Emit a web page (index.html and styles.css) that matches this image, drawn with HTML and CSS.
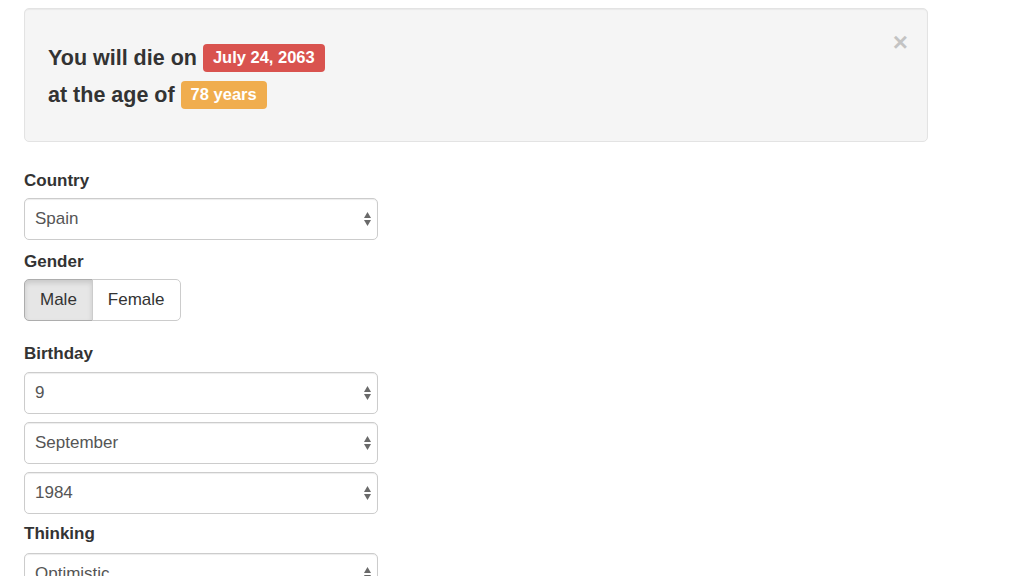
FILE: index.html
```html
<!DOCTYPE html>
<html>
<head>
<meta charset="utf-8">
<link rel="stylesheet" href="styles.css">
</head>
<body>
<div class="container">
  <div class="alert">
    <button class="close" type="button">×</button>
    <h4 class="result">You will die on <span class="badge badge-red">July 24, 2063</span></h4>
    <h4 class="result">at the age of <span class="badge badge-orange">78 years</span></h4>
  </div>

  <form class="form">
    <div class="field">
      <div class="label">Country</div>
      <div class="select"><span>Spain</span><svg class="arrows" width="7" height="14" viewBox="0 0 7 14"><path d="M3.5 0L7 6H0Z"/><path d="M3.5 14L7 8H0Z"/></svg></div>
    </div>

    <div class="field field-gender">
      <div class="label">Gender</div>
      <div class="btn-group">
        <div class="btn active">Male</div>
        <div class="btn">Female</div>
      </div>
    </div>

    <div class="field field-wide">
      <div class="label label-loose">Birthday</div>
      <div class="stack">
        <div class="select"><span>9</span><svg class="arrows" width="7" height="14" viewBox="0 0 7 14"><path d="M3.5 0L7 6H0Z"/><path d="M3.5 14L7 8H0Z"/></svg></div>
        <div class="select"><span>September</span><svg class="arrows" width="7" height="14" viewBox="0 0 7 14"><path d="M3.5 0L7 6H0Z"/><path d="M3.5 14L7 8H0Z"/></svg></div>
        <div class="select"><span>1984</span><svg class="arrows" width="7" height="14" viewBox="0 0 7 14"><path d="M3.5 0L7 6H0Z"/><path d="M3.5 14L7 8H0Z"/></svg></div>
      </div>
    </div>

    <div class="field">
      <div class="label label-looser">Thinking</div>
      <div class="select"><span>Optimistic</span><svg class="arrows" width="7" height="14" viewBox="0 0 7 14"><path d="M3.5 0L7 6H0Z"/><path d="M3.5 14L7 8H0Z"/></svg></div>
    </div>
  </form>
</div>
</body>
</html>
```
FILE: styles.css
```css
* { box-sizing: border-box; }
html, body {
  margin: 0;
  padding: 0;
  background: #fff;
  font-family: "Liberation Sans", Arial, sans-serif;
  color: #333;
  overflow: hidden;
}
.container {
  padding: 8px 0 0 24px;
}
.alert {
  position: relative;
  width: 904px;
  height: 134px;
  background: #f5f5f5;
  border: 1px solid #e3e3e3;
  border-radius: 5px;
  box-shadow: inset 0 1px 1px rgba(0,0,0,0.05);
  padding: 31px 24px 0 23px;
}
.result {
  margin: 0;
  font-size: 21.5px;
  font-weight: bold;
  line-height: 37px;
  color: #333;
}
.badge {
  display: inline-block;
  font-size: 16.5px;
  font-weight: bold;
  color: #fff;
  line-height: 1;
  padding: 5px 10px 6px;
  border-radius: 4px;
  vertical-align: 2px;
}
.badge-red { background: #d9534f; }
.badge-orange { background: #f0ad4e; }
.close {
  position: absolute;
  top: 20px;
  right: 19px;
  border: 0;
  background: none;
  padding: 0;
  font-family: "Liberation Sans", Arial, sans-serif;
  font-size: 26px;
  font-weight: bold;
  line-height: 1;
  color: #000;
  opacity: 0.2;
}
.form {
  display: flex;
  flex-direction: column;
  padding-top: 27px;
}
.field {
  display: flex;
  flex-direction: column;
  margin-bottom: 8px;
}
.field-gender { margin-top: 2px; }
.field-wide { margin-top: 13px; }
.label {
  font-size: 17px;
  font-weight: bold;
  line-height: 24px;
  margin-bottom: 5px;
  color: #333;
}
.label-loose { margin-bottom: 6px; }
.label-looser { margin-bottom: 7px; }
.select {
  width: 354px;
  height: 42px;
  border: 1px solid #ccc;
  border-radius: 5px;
  background: #fff;
  box-shadow: inset 0 1px 1px rgba(0,0,0,0.075);
  display: flex;
  align-items: center;
  justify-content: space-between;
  padding: 0 6px 0 10px;
  font-size: 17px;
  color: #555;
}
.arrows { fill: #6a6a6a; }
.stack {
  display: flex;
  flex-direction: column;
  gap: 8px;
}
.btn-group {
  display: flex;
}
.btn {
  height: 42px;
  display: flex;
  align-items: center;
  padding: 0 15px;
  font-size: 17px;
  color: #333;
  border: 1px solid #ccc;
  background: #fff;
}
.btn:first-child {
  border-radius: 5px 0 0 5px;
}
.btn:last-child {
  border-radius: 0 5px 5px 0;
  margin-left: -1px;
}
.btn.active {
  background: #e6e6e6;
  border-color: #adadad;
  box-shadow: inset 0 3px 5px rgba(0,0,0,0.125);
}
```
